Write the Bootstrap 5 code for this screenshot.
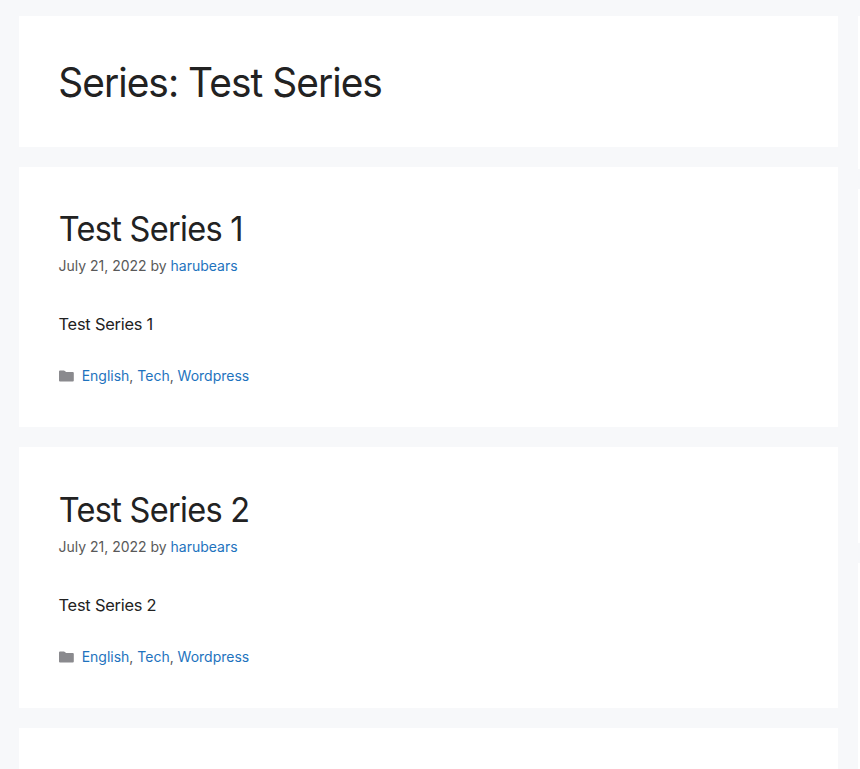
<!DOCTYPE html>
<html lang="en">
<head>
<meta charset="utf-8">
<meta name="viewport" content="width=device-width, initial-scale=1">
<title>Series: Test Series</title>
<link href="https://cdn.jsdelivr.net/npm/bootstrap@5.3.0/dist/css/bootstrap.min.css" rel="stylesheet">
<style>
body{background:#f7f8fa;font-family:Inter,"Liberation Sans",sans-serif;color:#222}
.layout{height:769px;padding:16px 0 0 19px;gap:20px}
.archive{width:819px;gap:20px}
.side-column{gap:20px}
.panel{background:#fff;padding:0 40px}
.side-widget{background:#fff}
.widget-a{height:153px}
.widget-b{height:354px}
.panel-head{height:131px;padding-top:42px}
.panel h1 span,.panel h2 span{display:inline-block;transform-origin:left center}
.panel-head h1{font-size:40.5px;line-height:49px;letter-spacing:-1px;white-space:nowrap}
.panel-head h1 span{transform:translateX(-.8px) scaleX(.96)}
.post{height:260.3px;padding-top:41.4px}
.post h2{font-size:34px;line-height:42px;letter-spacing:-.75px}
.post h2 span{transform:translateX(-.2px) scaleX(.957)}
.meta,.cats{font-size:14px;line-height:20px;color:#595959}
.meta{margin-top:6px;margin-left:-.5px;letter-spacing:-.01px}
.body-text{font-size:16.4px;line-height:24px;margin-top:36px;letter-spacing:-.22px;margin-left:-.5px}
.cats{margin-top:30px;letter-spacing:-.01px}
.cats svg{width:15px;height:12px;margin-right:8px;margin-left:-.3px;fill:#8a8a8e}
.archive a{color:#1e73be}
</style>
</head>
<body>
<div class="layout d-flex overflow-hidden">
<main class="archive d-flex flex-column flex-shrink-0">
<header class="panel panel-head flex-shrink-0"><h1 class="fw-normal m-0"><span>Series: Test Series</span></h1></header>
<article class="panel post flex-shrink-0">
<h2 class="fw-normal mb-0"><span>Test Series 1</span></h2>
<div class="meta"><span>July 21, 2022 by <a class="text-decoration-none" href="#">harubears</a></span></div>
<p class="body-text mb-0"><span>Test Series 1</span></p>
<footer class="cats d-flex align-items-center"><svg viewBox="0 0 15 12"><path d="M0 1.500Q0 .5 1 .5h3.900q.6 0 1 .4l1.200 1.200h6.700q1 0 1 1v7.400q0 1-1 1H1Q0 11.500 0 10.500z"/></svg><span><a class="text-decoration-none" href="#">English</a>, <a class="text-decoration-none" href="#">Tech</a>, <a class="text-decoration-none" href="#">Wordpress</a></span></footer>
</article>
<article class="panel post flex-shrink-0">
<h2 class="fw-normal mb-0"><span>Test Series 2</span></h2>
<div class="meta"><span>July 21, 2022 by <a class="text-decoration-none" href="#">harubears</a></span></div>
<p class="body-text mb-0"><span>Test Series 2</span></p>
<footer class="cats d-flex align-items-center"><svg viewBox="0 0 15 12"><path d="M0 1.500Q0 .5 1 .5h3.900q.6 0 1 .4l1.200 1.200h6.700q1 0 1 1v7.400q0 1-1 1H1Q0 11.500 0 10.500z"/></svg><span><a class="text-decoration-none" href="#">English</a>, <a class="text-decoration-none" href="#">Tech</a>, <a class="text-decoration-none" href="#">Wordpress</a></span></footer>
</article>
<div class="panel flex-fill"></div>
</main>
<aside class="side-column d-flex flex-column flex-fill">
<div class="side-widget widget-a flex-shrink-0"></div>
<div class="side-widget widget-b flex-shrink-0"></div>
<div class="side-widget flex-fill"></div>
</aside>
</div>
<script src="https://cdn.jsdelivr.net/npm/bootstrap@5.3.0/dist/js/bootstrap.bundle.min.js"></script>
</body>
</html>
